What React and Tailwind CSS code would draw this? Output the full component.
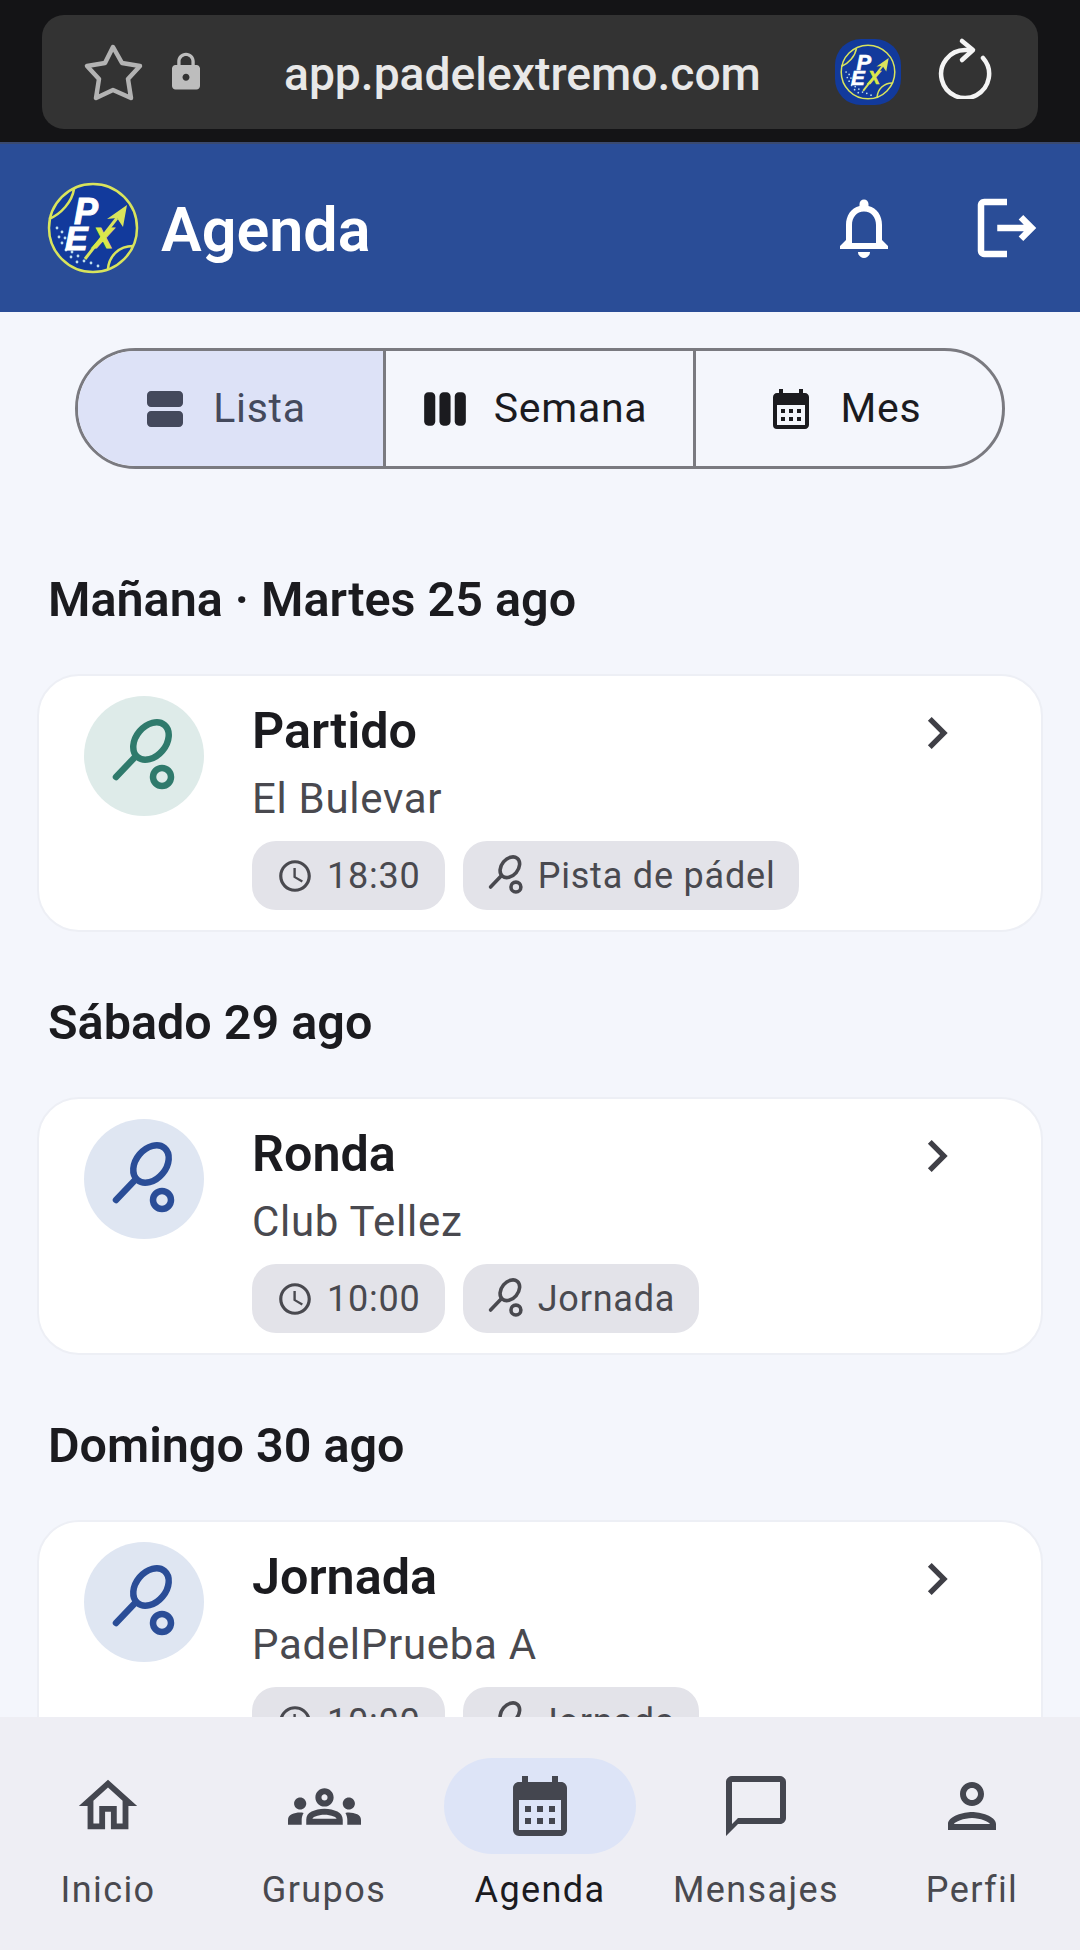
import React from "react";
import {
  MdLock,
  MdOutlineNotifications,
  MdOutlineLogout,
  MdViewAgenda,
  MdViewWeek,
  MdCalendarMonth,
  MdAccessTime,
  MdChevronRight,
  MdOutlineHome,
  MdOutlineGroups,
  MdChatBubbleOutline,
  MdOutlinePerson,
} from "react-icons/md";

const events = [
  { day: "Mañana · Martes 25 ago", title: "Partido", place: "El Bulevar", time: "18:30", kind: "Pista de pádel", green: true },
  { day: "Sábado 29 ago", title: "Ronda", place: "Club Tellez", time: "10:00", kind: "Jornada" },
  { day: "Domingo 30 ago", title: "Jornada", place: "PadelPrueba A", time: "10:00", kind: "Jornada" },
];

const navItems = [
  { label: "Inicio", Icon: MdOutlineHome, size: 70 },
  { label: "Grupos", Icon: MdOutlineGroups, size: 73 },
  { label: "Agenda", Icon: MdCalendarMonth, size: 72, active: true },
  { label: "Mensajes", Icon: MdChatBubbleOutline, size: 72 },
  { label: "Perfil", Icon: MdOutlinePerson, size: 72 },
];

const logoDots = [
  [10, 46], [15, 50], [12, 55], [18, 56], [15, 61], [21, 62], [19, 68], [25, 70],
  [24, 75], [31, 74], [30, 80], [37, 79], [44, 81], [51, 84],
];

// Club badge, used in the header and as the site icon
const PexLogo = ({ className }) => (
  <svg viewBox="0 0 92 92" className={className}>
    <circle cx="46" cy="46" r="44" fill="#123a9c" stroke="#d9e45c" strokeWidth="2.5" />
    <path d="M27 7 C25 20 14 32 2 37" fill="none" stroke="#d9e45c" strokeWidth="2.5" />
    <path d="M86 64 C72 64 62 74 61 87" fill="none" stroke="#d9e45c" strokeWidth="2.5" />
    <path d="M38 77 L70 36" stroke="#d9e45c" strokeWidth="3" />
    <path d="M80 23 L76 45 L70 36 L60 37 Z" fill="#d9e45c" />
    <g fill="#bfe0ee">
      {logoDots.map(([cx, cy]) => (
        <circle key={`${cx}-${cy}`} cx={cx} cy={cy} r="1.4" />
      ))}
    </g>
    <text fontFamily="'Liberation Sans', sans-serif" fontWeight="700" fontStyle="italic" fill="#fff" stroke="#fff" strokeWidth="1">
      <tspan x="27" y="42" fontSize="36">P</tspan>
      <tspan x="18" y="68" fontSize="34">E</tspan>
      <tspan x="46" y="66" fontSize="30" fill="#dbe74a" stroke="#dbe74a">X</tspan>
    </text>
  </svg>
);

const RacketIcon = ({ className }) => (
  <svg viewBox="26 21 68 78" fill="none" stroke="currentColor" strokeWidth="6.5" strokeLinecap="round" className={className}>
    <ellipse cx="67" cy="45" rx="15" ry="21" transform="rotate(40 67 45)" />
    <path d="M52 60 L32 81" />
    <circle cx="78" cy="81" r="9" />
  </svg>
);

const Chip = ({ children }) => (
  <div className="flex h-[69px] items-center gap-[13px] rounded-[24px] bg-[#e3e3e9] pl-[24px] pr-[24px] text-[36px] leading-none tracking-[0.8px] text-[#49494f]">
    {children}
  </div>
);

const EventCard = ({ event }) => (
  <div className="mx-[37px] flex h-[258px] rounded-[42px] border-2 border-[#edeff5] bg-white pl-[45px] pr-[72px] pt-[20px]">
    <div
      className={`flex h-[120px] w-[120px] shrink-0 items-center justify-center rounded-full ${
        event.green ? "bg-[#deebe9] text-[#2f7a6c]" : "bg-[#dfe6f2] text-[#2a4d97]"
      }`}
    >
      <RacketIcon className="h-[78px] w-[68px]" />
    </div>
    <div className="ml-[48px] flex-1">
      <div className="pt-[5px] text-[50.3px] font-semibold leading-[60px] text-[#1b1b1f]">{event.title}</div>
      <div className="mt-[14px] text-[42px] leading-[48px] tracking-[0.7px] text-[#49494f]">{event.place}</div>
      <div className="mt-[18px] flex gap-[18px]">
        <Chip>
          <MdAccessTime className="text-[38px]" />
          {event.time}
        </Chip>
        <Chip>
          <RacketIcon className="h-[43px] w-[38px]" />
          {event.kind}
        </Chip>
      </div>
    </div>
    <MdChevronRight className="mt-[5px] text-[64px] text-[#3f3f46]" />
  </div>
);

const App = () => {
  return (
    <div
      className="flex h-[1950px] w-[1080px] flex-col overflow-hidden bg-[#f4f6fc]"
      style={{ fontFamily: "Roboto, sans-serif" }}
    >
      {/* Browser chrome */}
      <div className="flex h-[142px] shrink-0 items-start bg-[#141416] px-[42px] pt-[15px]">
        <div className="flex h-[114px] w-full items-center rounded-[22px] bg-[#333333] pl-[40px] pr-[44px]">
          <svg viewBox="12 12 63 60" fill="none" stroke="#b3b3b3" strokeWidth="4.5" strokeLinejoin="round" className="h-[60px] w-[63px]">
            <polygon points="43,17 52,33 70,36 58,49 61,68 43,60 26,68 29,49 17,36 35,33" />
          </svg>
          <MdLock className="ml-[20px] text-[42px] text-[#bdbdbd]" />
          <span className="ml-[77px] flex-1 pt-[5px] text-[46.2px] font-medium text-[#e8e8e8]">app.padelextremo.com</span>
          <div className="flex h-[66px] w-[66px] items-center justify-center rounded-[26px] bg-[#123a9c]">
            <PexLogo className="h-[56px] w-[56px]" />
          </div>
          <svg viewBox="12 12 58 62" fill="none" stroke="#f4f4f4" strokeWidth="4.5" strokeLinecap="round" strokeLinejoin="round" className="mb-[8px] ml-[35px] h-[62px] w-[58px]">
            <path d="M48 25 H41 A24 24 0 1 0 59 33" />
            <path d="M38 16 L49 25 L38 35" />
          </svg>
        </div>
      </div>

      {/* App bar */}
      <header className="flex h-[170px] shrink-0 items-center border-t-2 border-[#3a4a70] bg-[#2a4d97] pl-[47px] pr-[34px] text-white">
        <PexLogo className="h-[92px] w-[92px]" />
        <h1 className="ml-[22px] flex-1 pt-[5px] text-[61px] font-semibold">Agenda</h1>
        <MdOutlineNotifications className="text-[72px]" />
        <MdOutlineLogout className="ml-[68px] text-[78px]" />
      </header>

      <main className="min-h-0 flex-1 overflow-hidden">
        {/* View switcher */}
        <div className="mx-[75px] mt-[36px] flex h-[121px] overflow-hidden rounded-full border-[3px] border-[#7a7a80] text-[41px] tracking-[0.7px] text-[#1b1b1f]">
          <div className="flex w-[308px] items-center justify-center gap-[24px] border-r-[3px] border-[#7a7a80] bg-[#dde2f7] pr-[14px] text-[#44495c]">
            <MdViewAgenda className="text-[48px]" />
            Lista
          </div>
          <div className="flex w-[310px] items-center justify-center gap-[24px] border-r-[3px] border-[#7a7a80] pr-[12px]">
            <MdViewWeek className="text-[50px]" />
            Semana
          </div>
          <div className="flex flex-1 items-center justify-center gap-[26px] pr-[10px]">
            <MdCalendarMonth className="text-[48px]" />
            Mes
          </div>
        </div>

        <div className="mt-[91px]">
          {events.map((event) => (
            <section key={event.title} className="mb-[51px]">
              <h2 className="mb-[34px] ml-[48px] h-[80px] text-[48.5px] font-semibold leading-[80px] text-[#1b1b1f]">{event.day}</h2>
              <EventCard event={event} />
            </section>
          ))}
        </div>
      </main>

      {/* Bottom navigation */}
      <nav className="grid h-[233px] shrink-0 grid-cols-5 bg-[#eeeef4] pt-[41px]">
        {navItems.map(({ label, Icon, size, active }) => (
          <div key={label} className="flex flex-col items-center">
            <div className={`flex h-[96px] w-[192px] items-center justify-center rounded-full ${active ? "bg-[#dde4f7]" : ""}`}>
              <Icon className="text-[#44464f]" style={{ fontSize: size }} />
            </div>
            <span className={`mt-[14px] text-[36px] leading-[44px] tracking-[1.4px] ${active ? "text-[#1b1b1f]" : "text-[#49494f]"}`}>{label}</span>
          </div>
        ))}
      </nav>
    </div>
  );
};

export default App;
